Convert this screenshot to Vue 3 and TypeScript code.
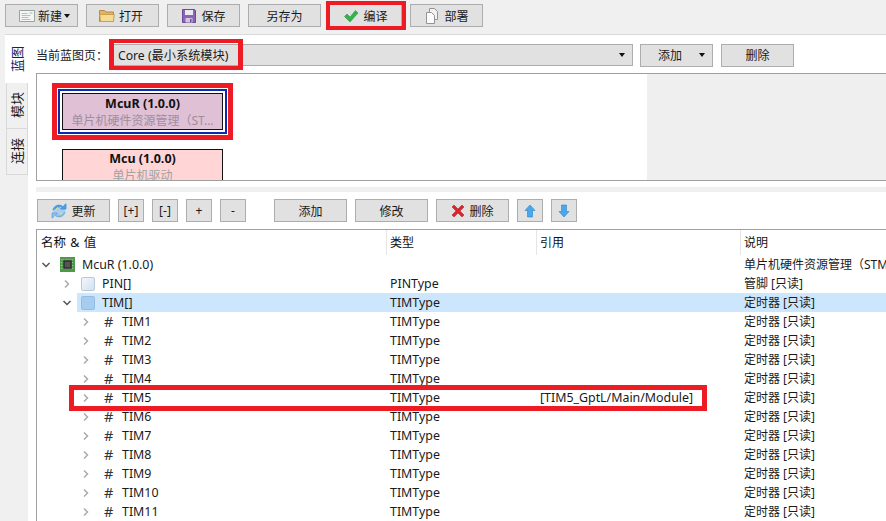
<script setup lang="ts">
const timNames = ['TIM1','TIM2','TIM3','TIM4','TIM5','TIM6','TIM7','TIM8','TIM9','TIM10','TIM11']
</script>

<template>
  <div class="app">
    <div class="toolbar">
      <button class="btn new-btn">
        <svg width="16" height="14" viewBox="0 0 16 14"><path d="M.5 1.500h15v11H.5z" fill="#f4f6f4" stroke="#97a5a2"/><path d="M2.500 4.500h6M2.500 6.500h9M2.500 8.500h7M2.500 10.500h9" stroke="#b4c0bd"/><path d="M10.500 3h3v2h-3z" fill="#c8d4d0"/></svg>
        <span>新建</span><i class="caret"></i>
      </button>
      <button class="btn open-btn">
        <svg width="16" height="14" viewBox="0 0 16 14"><path d="M.5 1.500h5l1.500 1.500h7.500v9.500H.5z" fill="#dfb466" stroke="#b58a3a"/><path d="M.8 5.500h14.400l-.7 7H1.500z" fill="#f6dc92" stroke="#c9a050"/></svg>
        <span>打开</span>
      </button>
      <button class="btn">
        <svg width="16" height="16" viewBox="0 0 16 16"><path d="M1.500 1.500h12l1 1v12h-13z" fill="#8d63b8" stroke="#6b4a94"/><path d="M4 2h8v5H4z" fill="#ece9f2"/><path d="M4.500 10h7v4.500h-7z" fill="#cfc8dc"/><path d="M9 11h1.500v3H9z" fill="#6b4a94"/></svg>
        <span>保存</span>
      </button>
      <button class="btn"><span>另存为</span></button>
      <button class="btn">
        <svg width="16" height="14" viewBox="0 0 16 14"><path d="M1.500 7.500l2.500-2.500 3 3 5.500-6.500 2.500 2.500-8 9z" fill="#35b24b" stroke="#2a9a3e" stroke-width=".6"/></svg>
        <span>编译</span>
      </button>
      <button class="btn">
        <svg width="16" height="18" viewBox="0 0 16 18"><path d="M5.500 1.500h5l3 3v8h-8z" fill="#f1f2f1" stroke="#8f9594"/><path d="M2.500 5.500h5l3 3v8h-8z" fill="#fbfbfb" stroke="#8f9594"/></svg>
        <span>部署</span>
      </button>
    </div>

    <div class="workspace">
      <div class="tabs">
        <div class="tab active"><span>蓝图</span></div>
        <div class="tab"><span>模块</span></div>
        <div class="tab"><span>连接</span></div>
      </div>
      <div class="content">
        <div class="page-row">
          <span class="page-label">当前蓝图页：</span>
          <div class="combo"><span>Core (最小系统模块)</span><i class="caret"></i></div>
          <button class="btn add-btn"><span>添加</span><i class="caret"></i></button>
          <button class="btn"><span>删除</span></button>
        </div>

        <div class="canvas">
          <div class="canvas-white">
            <div class="node selected">
              <div class="node-inner">
                <b>McuR (1.0.0)</b>
                <span>单片机硬件资源管理（ST...</span>
              </div>
            </div>
            <div class="node plain">
              <b>Mcu (1.0.0)</b>
              <span>单片机驱动</span>
            </div>
          </div>
          <div class="canvas-gray"></div>
        </div>

        <div class="splitter"></div>

        <div class="actions">
          <button class="btn">
            <svg width="16" height="16" viewBox="0 0 16 16"><circle cx="8" cy="8" r="6.500" fill="#a9cdee"/><path d="M2 7a6 6 0 0 1 9.500-3.500L9.500 6h5.500V.8l-2 1.700" fill="#4f9ede" stroke="#3f8fd6" stroke-width=".8"/><path d="M14 9a6 6 0 0 1-9.500 3.500L6.500 10H1v5.200l2-1.700" fill="#8fc0ea" stroke="#5ea5df" stroke-width=".8"/><path d="M5 6.500l2-2M11 9.500l-2 2" stroke="#e8d78a" stroke-width="1.200"/></svg>
            <span>更新</span>
          </button>
          <button class="btn small">[+]</button>
          <button class="btn small">[-]</button>
          <button class="btn small">+</button>
          <button class="btn small">-</button>
          <button class="btn gap-left"><span>添加</span></button>
          <button class="btn"><span>修改</span></button>
          <button class="btn">
            <svg width="14" height="14" viewBox="0 0 14 14"><path d="M1 3l2-2 4 4 4-4 2 2-4 4 4 4-2 2-4-4-4 4-2-2 4-4z" fill="#d8262c" stroke="#a81c20" stroke-width=".5"/></svg>
            <span>删除</span>
          </button>
          <button class="btn small">
            <svg width="12" height="14" viewBox="0 0 12 14"><path d="M6 1l5 5.500H8.500V13h-5V6.500H1z" fill="#4aa8ea" stroke="#2a86c8" stroke-width=".6"/></svg>
          </button>
          <button class="btn small">
            <svg width="12" height="14" viewBox="0 0 12 14"><path d="M6 13l5-5.500H8.500V1h-5v6.500H1z" fill="#4aa8ea" stroke="#2a86c8" stroke-width=".6"/></svg>
          </button>
        </div>

        <div class="tree">
          <div class="head row">
            <div class="h-cell first">名称 &amp; 值</div>
            <div class="h-cell sep">类型</div>
            <div class="h-cell sep">引用</div>
            <div class="h-cell sep">说明</div>
          </div>

          <div class="row">
            <div class="cell name lvl0">
              <svg class="arrow" width="10" height="10" viewBox="0 0 10 10"><path d="M1.500 3l3.500 3.500L8.500 3" fill="none" stroke="#555" stroke-width="1.500"/></svg>
              <svg class="chip" width="15" height="15" viewBox="0 0 16 16"><rect width="16" height="16" fill="#4f9a4a"/><path d="M1 3h14M1 6h14M1 9h14M1 12h14" stroke="#b7d9a8" stroke-dasharray="1 1"/><rect x="3.500" y="3.500" width="9" height="9" fill="#2d2d2d"/><rect x="5" y="5" width="6" height="6" fill="#555"/></svg>
              <span>McuR (1.0.0)</span>
            </div>
            <div class="cell"></div><div class="cell"></div>
            <div class="cell desc">单片机硬件资源管理（STM32）</div>
          </div>

          <div class="row">
            <div class="cell name lvl1">
              <svg class="arrow" width="10" height="10" viewBox="0 0 10 10"><path d="M3 1.500L6.500 5 3 8.500" fill="none" stroke="#aaa" stroke-width="1.500"/></svg>
              <i class="box light"></i>
              <span>PIN[]</span>
            </div>
            <div class="cell">PINType</div><div class="cell"></div>
            <div class="cell desc">管脚 [只读]</div>
          </div>

          <div class="row selected-row">
            <div class="cell name lvl1">
              <svg class="arrow" width="10" height="10" viewBox="0 0 10 10"><path d="M1.500 3l3.500 3.500L8.500 3" fill="none" stroke="#555" stroke-width="1.500"/></svg>
              <i class="box blue"></i>
              <span>TIM[]</span>
            </div>
            <div class="cell">TIMType</div><div class="cell"></div>
            <div class="cell desc">定时器 [只读]</div>
          </div>

          <div class="row" v-for="n in timNames" :key="n">
            <div class="cell name lvl2">
              <svg class="arrow" width="10" height="10" viewBox="0 0 10 10"><path d="M3 1.500L6.500 5 3 8.500" fill="none" stroke="#aaa" stroke-width="1.500"/></svg>
              <span class="hash">#</span>
              <span>{{ n }}</span>
            </div>
            <div class="cell">TIMType</div>
            <div class="cell">{{ n === 'TIM5' ? '[TIM5_GptL/Main/Module]' : '' }}</div>
            <div class="cell desc">定时器 [只读]</div>
          </div>
        </div>
      </div>
    </div>

    <div class="mark mark-compile"></div>
    <div class="mark mark-combo"></div>
    <div class="mark mark-node"></div>
    <div class="mark mark-row"></div>
  </div>
</template>

<style>
html, body { margin: 0; background: #f0f0f0; }
</style>

<style scoped>
.app {
  position: relative;
  width: 886px;
  height: 521px;
  overflow: hidden;
  background: #f0f0f0;
  font-family: "Noto Sans", "Noto Sans CJK SC", sans-serif;
  font-size: 12px;
  color: #1a1a1a;
  display: flex;
  flex-direction: column;
}
.btn {
  box-sizing: border-box;
  width: 73px;
  height: 23px;
  padding: 0;
  border: 1px solid #adadad;
  background: #e1e1e1;
  font: inherit;
  color: inherit;
  display: flex;
  align-items: center;
  justify-content: center;
  gap: 4px;
  flex: none;
}
.btn svg { flex: none; }
.caret {
  display: inline-block;
  width: 0;
  height: 0;
  border-left: 3.500px solid transparent;
  border-right: 3.500px solid transparent;
  border-top: 4px solid #111;
}
.toolbar {
  display: flex;
  gap: 8px;
  height: 23px;
  padding: 4px 0 0 5px;
  flex: none;
}
.new-btn { padding-left: 6px; gap: 3px; }
.new-btn .caret { margin-left: -1px; }
.open-btn { padding-right: 3px; }
.workspace {
  display: flex;
  margin: 7px 0 0 5px;
  flex: 1;
  min-height: 0;
  background: #fff;
  border-top: 1px solid #d9d9d9;
}
.tabs {
  width: 23px;
  flex: none;
  background: #f0f0f0;
  display: flex;
  flex-direction: column;
}
.tab {
  box-sizing: border-box;
  height: 46px;
  margin-left: 1px;
  width: 22px;
  border: 1px solid #d9d9d9;
  border-top: 0;
  background: #f0f0f0;
  display: flex;
  align-items: center;
  justify-content: center;
}
.tab span {
  writing-mode: vertical-rl;
  text-orientation: sideways;
  transform: rotate(180deg);
  font-size: 13px;
  line-height: 16px;
}
.tab.active {
  height: 48px;
  margin-left: 0;
  width: 23px;
  background: #fff;
  border: 0;
  color: #0a246a;
}
.content {
  flex: 1;
  min-width: 0;
  padding-left: 8px;
  display: flex;
  flex-direction: column;
}
.page-row {
  display: flex;
  align-items: center;
  height: 22px;
  margin-top: 9px;
  flex: none;
}
.page-label { width: 74px; flex: none; }
.combo {
  box-sizing: border-box;
  width: 523px;
  height: 22px;
  margin-right: 7px;
  background: #e1e1e1;
  border: 1px solid #adadad;
  display: flex;
  align-items: center;
  justify-content: space-between;
  padding: 0 7px;
  flex: none;
  font-size: 12.200px;
}
.add-btn { margin-right: 8px; justify-content: space-between; padding: 0 7px 0 17px; }
.canvas {
  display: flex;
  box-sizing: border-box;
  height: 108px;
  margin-top: 7px;
  border: 1px solid #a0a0a0;
  border-right: 0;
  flex: none;
  overflow: hidden;
}
.canvas-white {
  width: 610px;
  flex: none;
  background: #fff;
  padding: 15px 0 0 25px;
  box-sizing: border-box;
}
.canvas-gray { flex: 1; background: #efefef; }
.node {
  box-sizing: border-box;
  width: 161px;
  display: flex;
  flex-direction: column;
  align-items: center;
  font-size: 12px;
  line-height: 17px;
}
.node b { color: #111; font-weight: 700; font-size: 12.500px; }
.node span { color: #a2a2a2; white-space: nowrap; }
.node.selected {
  width: 169px;
  height: 45px;
  border: 2px solid #0a2bb0;
  background: #fff;
  padding: 2px;
  margin-left: -4px;
}
.node-inner {
  box-sizing: border-box;
  width: 100%;
  height: 100%;
  border: 1px solid #111;
  background: #dfc0d4;
  display: flex;
  flex-direction: column;
  align-items: center;
  padding-top: 1px;
}
.node-inner span { color: #a08ea0; }
.node.plain {
  height: 60px;
  margin-top: 15px;
  border: 1px solid #111;
  background: #ffd5d5;
}
.splitter {
  height: 5px;
  margin-top: 6px;
  background: #f0f0f0;
  flex: none;
}
.actions {
  display: flex;
  gap: 8px;
  margin: 7px 0 0 1px;
  flex: none;
}
.btn.small { width: 26px; }
.gap-left { margin-left: 20px; }
.tree {
  margin-top: 7px;
  flex: 1;
  min-height: 0;
  overflow: hidden;
  border-top: 1px solid #a0a0a0;
  border-left: 1px solid #a0a0a0;
  background: #fff;
}
.row {
  display: grid;
  grid-template-columns: 349px 150px 204px 1fr;
  height: 19px;
  line-height: 19px;
  white-space: nowrap;
}
.head { height: 25px; line-height: 25px; }
.h-cell { padding-left: 4px; color: #111; }
.h-cell.first { font-size: 12.500px; word-spacing: 1px; }
.h-cell.sep { border-left: 1px solid #e5e5e5; height: 25px; box-sizing: border-box; padding-left: 3px; }
.cell { padding-left: 4px; overflow: hidden; font-size: 12.400px; }
.cell.desc { padding-left: 4px; font-size: 12px; }
.name { display: flex; align-items: center; padding-left: 0; overflow: visible; }
.lvl0 { padding-left: 4px; }
.lvl0 .arrow { margin-right: 9px; }
.lvl0 .chip { margin-right: 7px; }
.lvl1 { padding-left: 25px; }
.lvl1 .arrow { margin-right: 9px; }
.lvl1 span { margin-left: 7px; }
.lvl2 { padding-left: 44px; }
.lvl2 .arrow { margin-right: 13px; }
.hash { width: 18px; font-size: 14.500px; color: #333; }
.box {
  box-sizing: border-box;
  display: block;
  width: 14px;
  height: 14px;
  border-radius: 2px;
}
.box.light { background: linear-gradient(135deg, #f2f6fb, #d3e1f0); border: 1px solid #b9c9dc; }
.box.blue { background: #a6cdf0; border: 1px solid #93bde4; }
.selected-row { background: #cce6fd; margin-left: 40px; grid-template-columns: 309px 150px 204px 1fr; }
.selected-row .name { padding-left: 0; margin-left: -15px; }
.mark {
  position: absolute;
  box-sizing: border-box;
  border: 4px solid #ed1c24;
  pointer-events: none;
}
.mark-compile { left: 326px; top: 1px; width: 80px; height: 29px; }
.mark-combo { left: 109px; top: 39px; width: 134px; height: 31px; border-width: 4px 5px; }
.mark-node { left: 52px; top: 83px; width: 181px; height: 57px; border-width: 5px; }
.mark-row { left: 69px; top: 385px; width: 638px; height: 26px; border-width: 5px; }
</style>
